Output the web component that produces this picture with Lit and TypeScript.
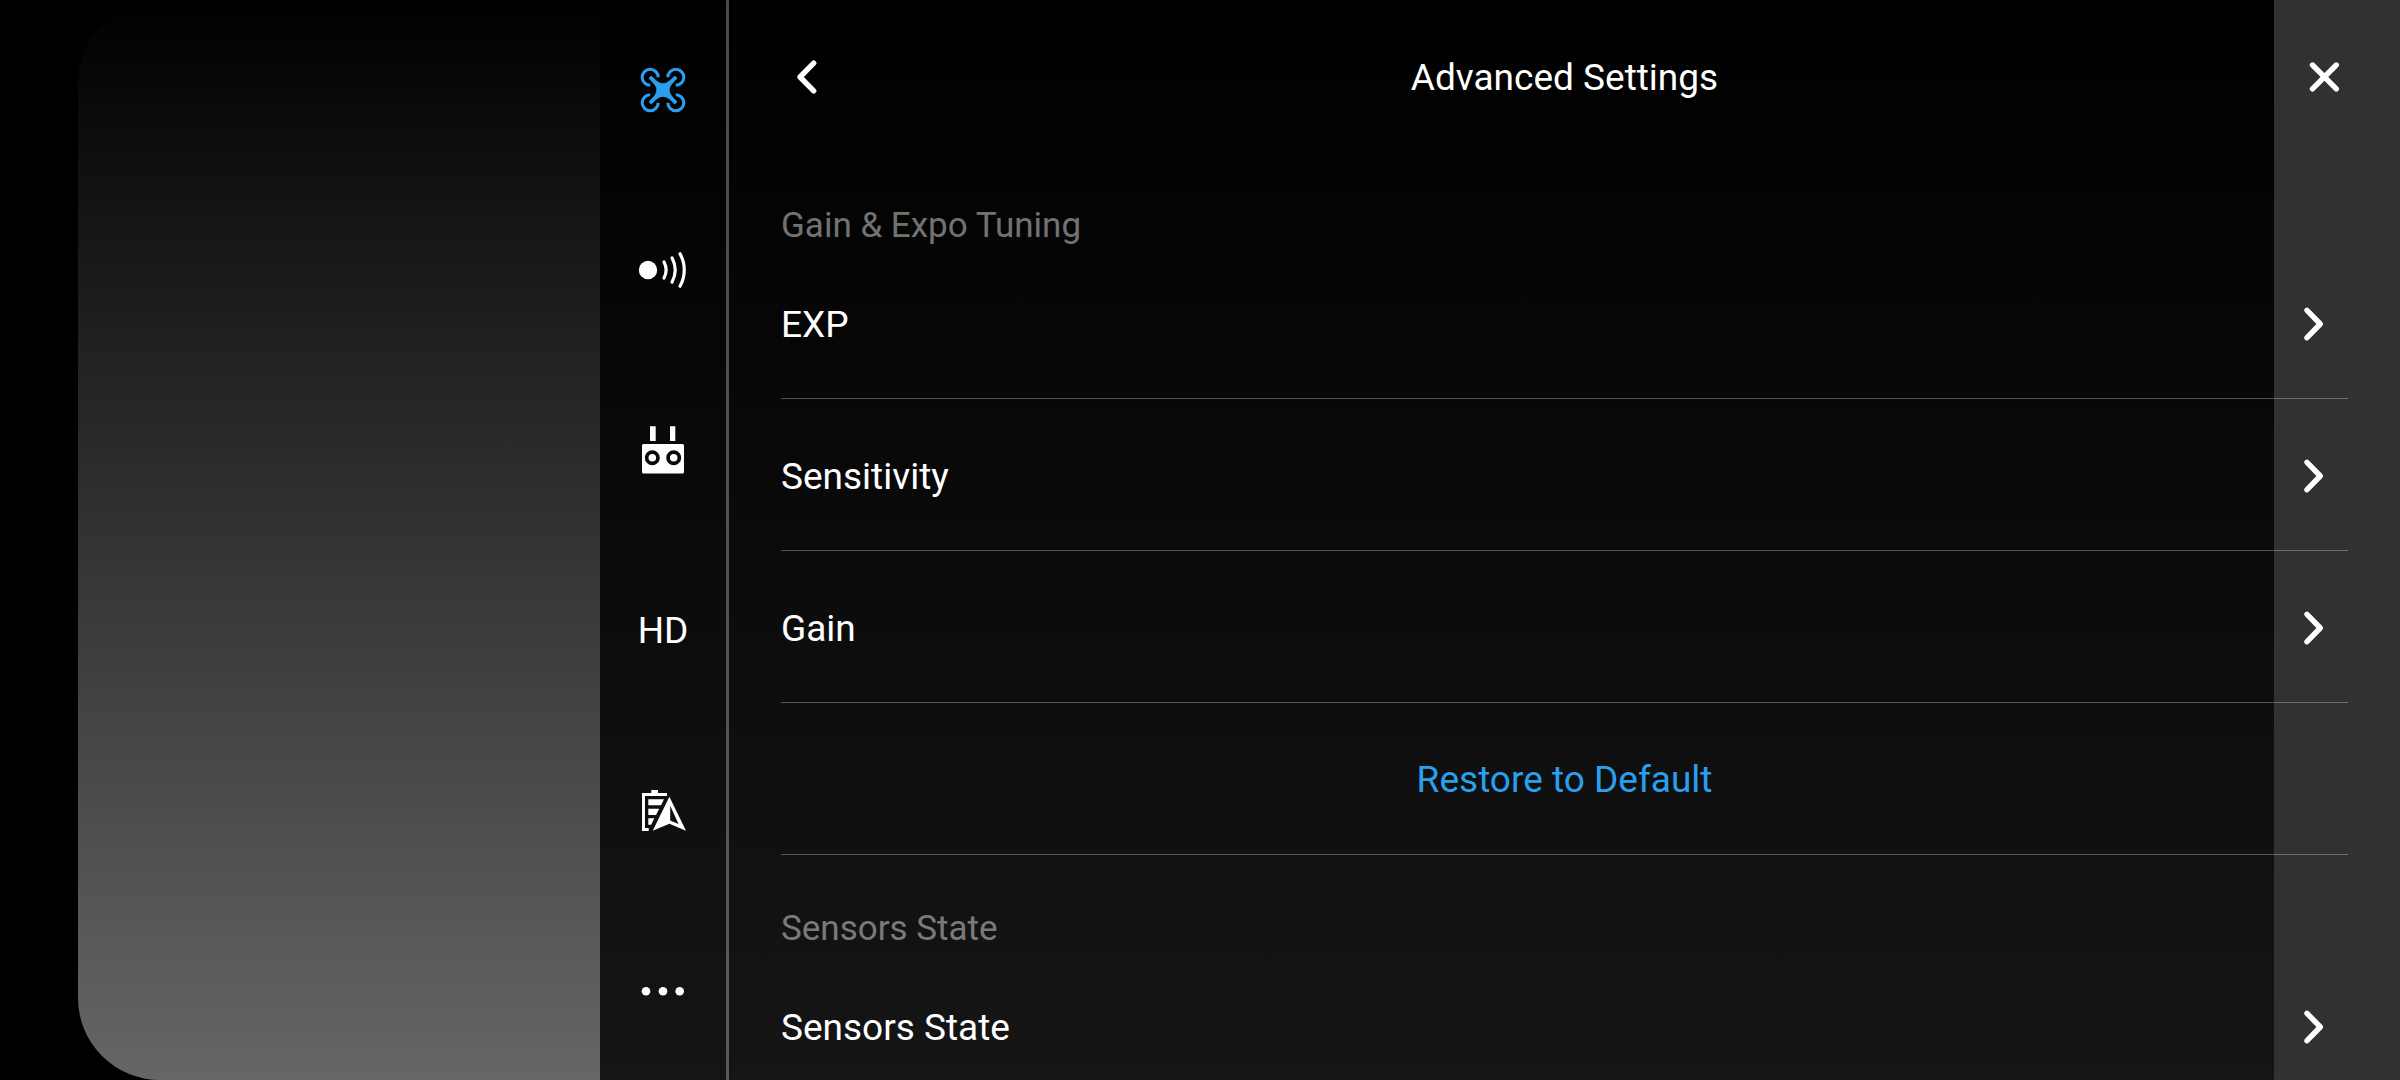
import { LitElement, html, svg, css, nothing } from "lit";
import type { TemplateResult } from "lit";
import { customElement, property, state } from "lit/decorators.js";
import { classMap } from "lit/directives/class-map.js";

interface NavItem {
  id: string;
  label: string;
  icon: TemplateResult | null;
}

interface Row {
  label: string;
  kind: "link" | "action";
}

interface Section {
  title: string;
  rows: Row[];
}

const NAV: NavItem[] = [
  {
    id: "aircraft",
    label: "Aircraft",
    icon: svg`
      <g fill="none" stroke="currentColor" stroke-width="3.1">
        <path d="M25.2 17.2A8 8 0 1 0 17.2 25.2" />
        <path d="M34.8 17.2A8 8 0 1 1 42.8 25.2" />
        <path d="M25.2 42.8A8 8 0 1 1 17.2 34.8" />
        <path d="M34.8 42.8A8 8 0 1 0 42.8 34.8" />
      </g>
      <path
        fill="currentColor"
        stroke="currentColor"
        stroke-width="1.2"
        stroke-linejoin="round"
        d="M18.2 16.4C24 22 26 23.8 30 23.8S36 22 41.8 16.4L43.6 18.2C38 24 36 26 36 30S38 36 43.6 41.8L41.8 43.6C36 38 34 36.2 30 36.2S24 38 18.2 43.6L16.4 41.8C22 36 24 34 24 30S22 24 16.4 18.2Z"
      />
    `,
  },
  {
    id: "sensing",
    label: "Sensing",
    icon: svg`
      <circle cx="15" cy="30" r="9.2" fill="currentColor" />
      <g fill="none" stroke="currentColor" stroke-width="3.2" stroke-linecap="round">
        <path d="M31 22A17 17 0 0 1 31 38" />
        <path d="M39 17.8A26 26 0 0 1 39 42.2" />
        <path d="M47 13.8A33 33 0 0 1 47 46.2" />
      </g>
    `,
  },
  {
    id: "controller",
    label: "Remote controller",
    icon: svg`
      <g fill="currentColor">
        <path d="M17 6.3H22.7V21H17ZM37 6.3H42.3V21H37Z" />
        <path
          fill-rule="evenodd"
          d="M10.5 24H49.5Q51 24 51 25.5V52Q51 53.5 49.5 53.5H10.5Q9 53.5 9 52V25.5Q9 24 10.5 24ZM11.8 37.7A7.5 7.5 0 1 0 26.8 37.7A7.5 7.5 0 1 0 11.8 37.7ZM33.2 37.7A7.5 7.5 0 1 0 48.2 37.7A7.5 7.5 0 1 0 33.2 37.7Z"
        />
        <circle cx="19.3" cy="37.7" r="3.8" />
        <circle cx="40.7" cy="37.7" r="3.8" />
      </g>
    `,
  },
  { id: "hd", label: "HD", icon: null },
  {
    id: "battery",
    label: "Flight battery",
    icon: svg`
      <g fill="currentColor">
        <path d="M18.3 10H25V13H34V16H12V48H15.7V51H9V13H18.3Z" />
        <path d="M15.3 19.3H31L28 25.3H15.3ZM15.3 28.8H26.2L23 35H15.3ZM15.3 38.3H21.3L18.2 44.7H15.3Z" />
        <path fill-rule="evenodd" d="M36.4 16.7L53 50.7L36.4 43.7L19.7 50.7ZM37.2 25.7V40.5L45.5 44Z" />
      </g>
    `,
  },
  {
    id: "more",
    label: "More",
    icon: svg`
      <g fill="currentColor">
        <circle cx="13" cy="31.3" r="4.3" />
        <circle cx="30" cy="31.3" r="4.3" />
        <circle cx="46.7" cy="31.3" r="4.3" />
      </g>
    `,
  },
];

const SECTIONS: Section[] = [
  {
    title: "Gain & Expo Tuning",
    rows: [
      { label: "EXP", kind: "link" },
      { label: "Sensitivity", kind: "link" },
      { label: "Gain", kind: "link" },
      { label: "Restore to Default", kind: "action" },
    ],
  },
  {
    title: "Sensors State",
    rows: [{ label: "Sensors State", kind: "link" }],
  },
];

@customElement("settings-nav")
export class SettingsNav extends LitElement {
  @state() private active = "aircraft";

  static styles = css`
    :host {
      display: block;
      flex: none;
      width: 126px;
      border-right: 3px solid rgba(255, 255, 255, 0.29);
    }
    .list {
      display: flex;
      flex-direction: column;
      height: 100%;
    }
    .item {
      flex: 1;
      display: flex;
      align-items: center;
      justify-content: center;
      padding: 0;
      border: 0;
      background: none;
      color: #fff;
      font: inherit;
      cursor: pointer;
    }
    .item.active {
      color: #2a9fee;
    }
    .glyph {
      display: block;
      width: 60px;
      height: 60px;
    }
    .word {
      padding-top: 2px;
      font-size: 37px;
      line-height: 44px;
    }
  `;

  render() {
    return html`
      <nav class="list">
        ${NAV.map(
          (item) => html`
            <button
              type="button"
              class=${classMap({ item: true, active: item.id === this.active })}
              aria-label=${item.label}
              @click=${() => (this.active = item.id)}
            >
              ${item.icon
                ? html`<svg class="glyph" viewBox="0 0 60 60" aria-hidden="true">${item.icon}</svg>`
                : html`<span class="word">${item.label}</span>`}
            </button>
          `,
        )}
      </nav>
    `;
  }
}

@customElement("settings-row")
export class SettingsRow extends LitElement {
  @property() label = "";
  @property() kind: Row["kind"] = "link";

  static styles = css`
    :host {
      display: block;
      border-bottom: 1px solid rgba(255, 255, 255, 0.29);
    }
    .row {
      display: flex;
      align-items: center;
      justify-content: space-between;
      box-sizing: border-box;
      width: 100%;
      height: 151px;
      padding: 3px 0 0;
      border: 0;
      background: none;
      color: #fff;
      font: inherit;
      font-size: 37px;
      line-height: 44px;
      text-align: left;
      cursor: pointer;
    }
    .row.action {
      justify-content: center;
      padding: 0;
      color: #2a9fee;
    }
    .label {
      padding-top: 2px;
    }
    .chevron {
      display: block;
      width: 48px;
      height: 48px;
      fill: none;
      stroke: currentColor;
      stroke-width: 5.4;
      stroke-linecap: round;
      stroke-linejoin: round;
    }
  `;

  render() {
    return html`
      <button type="button" class=${classMap({ row: true, action: this.kind === "action" })}>
        <span class="label">${this.label}</span>
        ${this.kind === "link"
          ? html`<svg class="chevron" viewBox="0 0 48 48" aria-hidden="true">
              <path d="M7 10.3L20.3 24L7 37.7" />
            </svg>`
          : nothing}
      </button>
    `;
  }
}

@customElement("app-root")
export class AppRoot extends LitElement {
  static styles = css`
    :host {
      display: flex;
      height: 100vh;
      overflow: hidden;
      background: #000;
      color: #fff;
      font-family: Roboto, "Noto Sans", sans-serif;
    }
    .preview {
      display: flex;
      box-sizing: border-box;
      width: 25%;
      padding-left: 78px;
    }
    .view {
      flex: 1;
      border-radius: 82px 0 0 82px;
      background: linear-gradient(#000, #666);
    }
    .panel {
      flex: 1;
      display: flex;
      min-width: 0;
      background:
        linear-gradient(#313131, #313131) right / 126px 100% no-repeat,
        linear-gradient(#000, #151515);
    }
    .content {
      flex: 1;
      min-width: 0;
      padding: 0 52px;
      overflow: hidden;
    }
    .header {
      display: grid;
      grid-template-columns: 48px 1fr 48px;
      align-items: center;
      box-sizing: border-box;
      height: 152px;
      padding-top: 2px;
    }
    .title {
      margin: 0;
      padding-top: 2px;
      font-size: 37px;
      font-weight: 400;
      line-height: 44px;
      text-align: center;
    }
    .tool {
      padding: 0;
      border: 0;
      background: none;
      color: inherit;
      cursor: pointer;
    }
    .glyph {
      display: block;
      width: 48px;
      height: 48px;
      fill: none;
      stroke: currentColor;
      stroke-width: 5.4;
      stroke-linecap: round;
      stroke-linejoin: round;
    }
    .section-title {
      display: flex;
      align-items: flex-end;
      box-sizing: border-box;
      height: 95px;
      margin: 0;
      padding-bottom: 1px;
      color: rgba(255, 255, 255, 0.45);
      font-size: 35px;
      font-weight: 400;
      line-height: 40px;
    }
  `;

  render() {
    return html`
      <div class="preview"><div class="view"></div></div>
      <div class="panel">
        <settings-nav></settings-nav>
        <main class="content">
          <header class="header">
            <button type="button" class="tool" aria-label="Back">
              <svg class="glyph" viewBox="0 0 48 48" aria-hidden="true">
                <path d="M32.7 10.2L19 24L32.7 37.8" />
              </svg>
            </button>
            <h1 class="title">Advanced Settings</h1>
            <button type="button" class="tool" aria-label="Close">
              <svg class="glyph" viewBox="0 0 48 48" aria-hidden="true">
                <path d="M12.5 12L36.3 35.8M36.3 12L12.5 35.8" />
              </svg>
            </button>
          </header>
          ${SECTIONS.map(
            (section) => html`
              <section>
                <h2 class="section-title">${section.title}</h2>
                ${section.rows.map(
                  (row) => html`<settings-row .label=${row.label} .kind=${row.kind}></settings-row>`,
                )}
              </section>
            `,
          )}
        </main>
      </div>
    `;
  }
}
